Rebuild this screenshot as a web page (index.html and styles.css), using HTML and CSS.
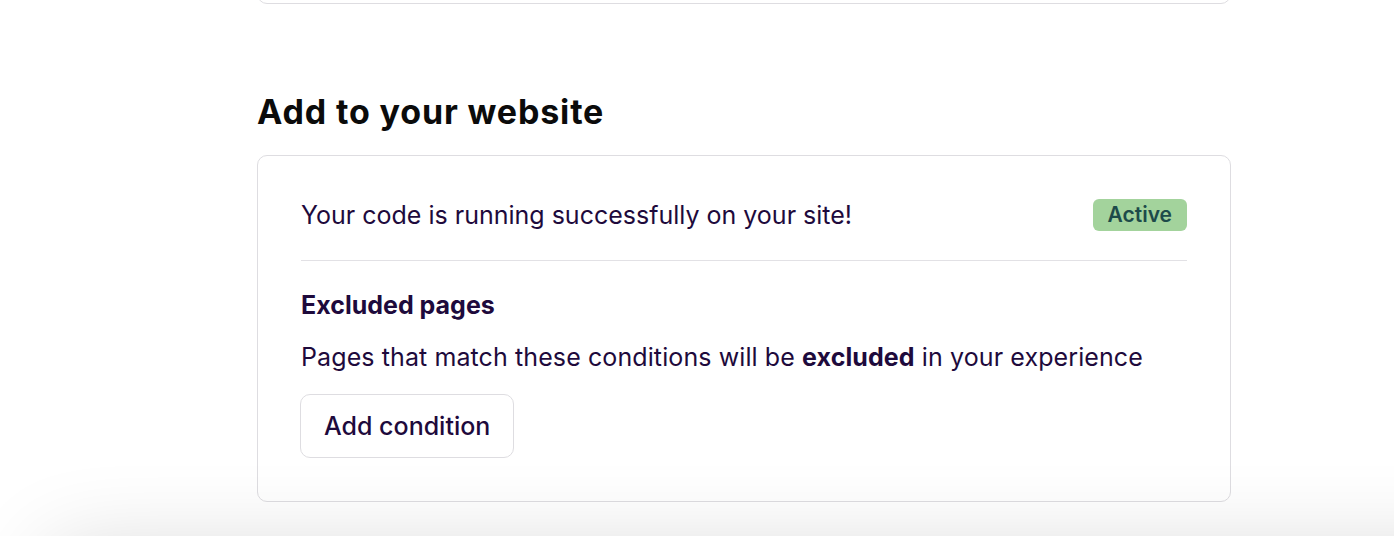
FILE: index.html
```html
<!DOCTYPE html>
<html lang="en">
<head>
<meta charset="utf-8">
<title>Add to your website</title>
<link rel="stylesheet" href="styles.css">
</head>
<body>
<main class="page">
  <div class="card card-prev"></div>
  <h2 class="section-title">Add to your website</h2>
  <section class="card">
    <div class="status-row">
      <p class="status-text">Your code is running successfully on your site!</p>
      <span class="badge">Active</span>
    </div>
    <hr class="divider">
    <h3 class="sub-title">Excluded pages</h3>
    <p class="desc">Pages that match these conditions will be <strong>excluded</strong> in your experience</p>
    <button class="btn" type="button">Add condition</button>
  </section>
</main>
<div class="bottom-shadow"></div>
</body>
</html>
```
FILE: styles.css
```css
html, body {
  margin: 0;
  padding: 0;
  background: #ffffff;
}
body {
  font-family: Inter, "Noto Sans", sans-serif;
  color: #1e0a3c;
  overflow: hidden;
  height: 536px;
}
.page {
  width: 974px;
  margin-left: 257px;
  display: flex;
  flex-direction: column;
}
.card {
  box-sizing: border-box;
  border: 1px solid #dedde1;
  border-radius: 10px;
  padding: 43px;
  background: #fff;
}
.card-prev {
  height: 100px;
  margin-top: -96px;
  padding: 0;
}
.section-title {
  margin: 88px 0 23px;
  font-size: 34px;
  font-weight: 700;
  line-height: 40px;
  color: #0b0b0b;
  letter-spacing: 0.85px;
}
.status-row {
  display: flex;
  align-items: center;
  justify-content: space-between;
  height: 32px;
}
.status-text {
  margin: 0;
  font-size: 25px;
  line-height: 32px;
}
.badge {
  background: #a3d39c;
  color: #1d4b4a;
  font-weight: 600;
  font-size: 21px;
  line-height: 32px;
  padding: 0 15px;
  border-radius: 6px;
}
.divider {
  border: 0;
  border-top: 1px solid #e2e1e5;
  margin: 29px 0 0;
}
.sub-title {
  margin: 28px 0 0;
  font-size: 25px;
  font-weight: 700;
  line-height: 32px;
}
.desc {
  margin: 20px 0 0;
  font-size: 25px;
  line-height: 32px;
  letter-spacing: 0.1px;
}
.desc strong {
  font-weight: 700;
}
.btn {
  display: block;
  margin-top: 21px;
  margin-left: -1px;
  height: 64px;
  padding: 0 23px;
  background: #fff;
  border: 1px solid #dedde1;
  border-radius: 10px;
  font-family: inherit;
  font-size: 25px;
  font-weight: 500;
  color: #1e0a3c;
}
.bottom-shadow {
  position: fixed;
  left: 60px;
  right: -200px;
  top: 560px;
  height: 200px;
  box-shadow: 0 0 90px 10px rgba(0, 0, 0, 0.16);
  pointer-events: none;
}
```
